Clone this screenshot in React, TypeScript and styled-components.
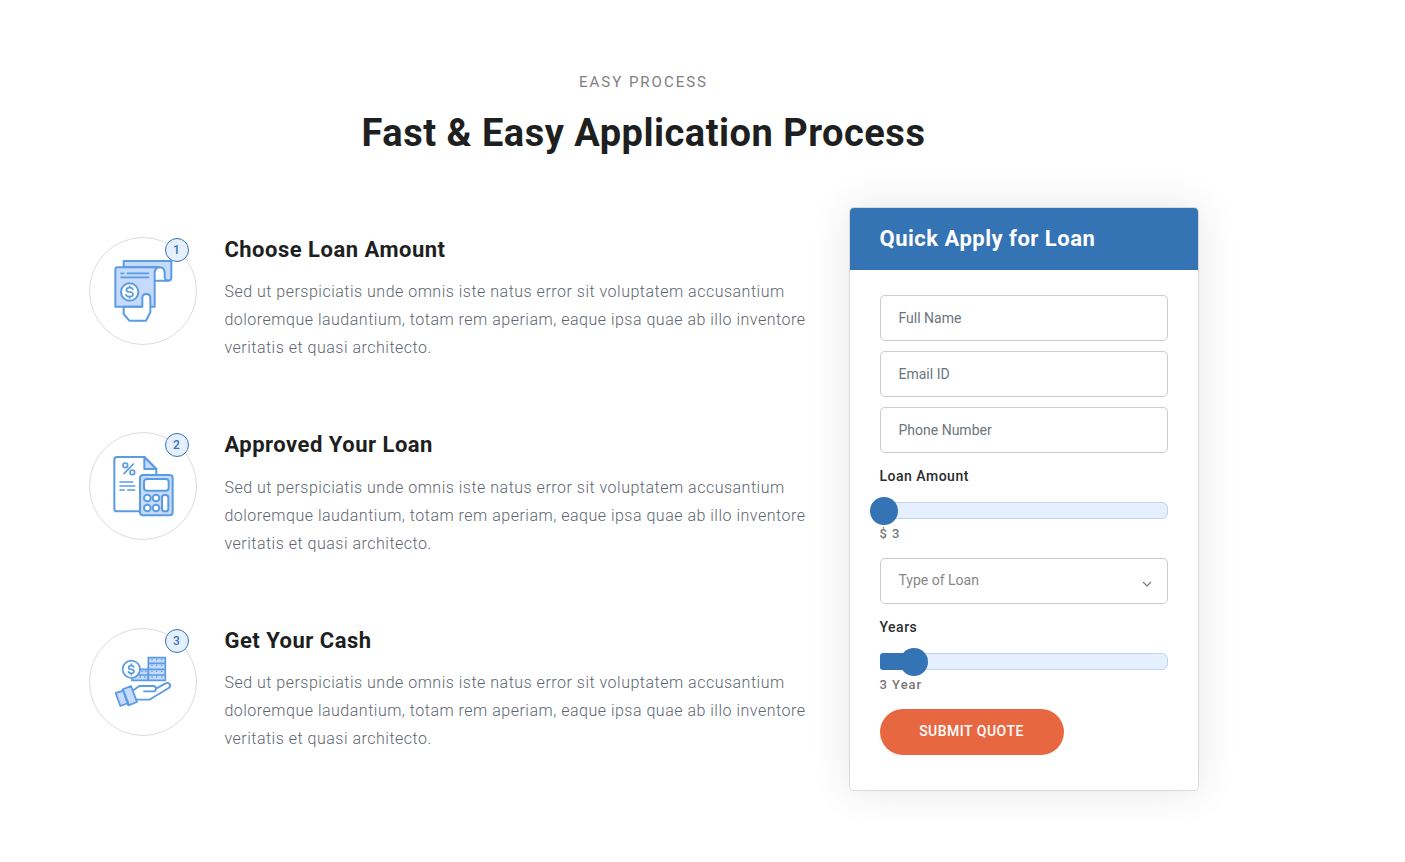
import React from "react";
import styled, { createGlobalStyle } from "styled-components";

const GlobalStyle = createGlobalStyle`
  *, *::before, *::after { box-sizing: border-box; }
  body { margin: 0; background: #fff; font-family: Roboto, sans-serif; color: #1d1f20; }
  h2, h3, p { margin: 0; }
`;

const Section = styled.section`
  width: 1110px;
  margin-left: 88.5px;
  padding-top: 70px;
`;

const Heading = styled.header`
  text-align: center;
  height: 137px;
`;

const Eyebrow = styled.p`
  font-size: 15px;
  line-height: 24px;
  letter-spacing: 2px;
  color: #808080;
  text-transform: uppercase;
`;

const Title = styled.h2`
  margin-top: 16px;
  font-size: 38px;
  line-height: 46px;
  font-weight: 700;
  letter-spacing: 0.5px;
`;

const Columns = styled.div`
  display: grid;
  grid-template-columns: 730px 350px;
  column-gap: 30px;
  align-items: start;
`;

const Steps = styled.div`
  padding-top: 29.9px;
`;

const Step = styled.article`
  display: grid;
  grid-template-columns: 108px 1fr;
  column-gap: 27.9px;
  margin-bottom: 70px;
`;

const IconRing = styled.div`
  position: relative;
  width: 108px;
  height: 108px;
  border: 1px solid #dcdcdc;
  border-radius: 50%;
`;

const StepIcon = styled.svg`
  display: block;
  width: 108px;
  height: 108px;
  margin: -1px;
  fill: none;
  stroke: #5a9ce2;
  stroke-width: 6;
  stroke-linecap: round;
  stroke-linejoin: round;
`;

const StepNumber = styled.span`
  position: absolute;
  top: 0;
  right: 7px;
  width: 24px;
  height: 24px;
  border: 1px solid #3473b4;
  border-radius: 50%;
  background: #e5effe;
  color: #3473b4;
  font-size: 12px;
  font-weight: 500;
  line-height: 22px;
  text-align: center;
`;

const StepTitle = styled.h3`
  font-size: 22px;
  line-height: 26.4px;
  font-weight: 700;
  letter-spacing: 0.5px;
`;

const StepText = styled.p`
  margin-top: 15px;
  font-size: 16px;
  line-height: 28px;
  font-weight: 300;
  letter-spacing: 0.5px;
  color: #5e6670;
`;

const Card = styled.aside`
  height: 584px;
  border: 1px solid #dadada;
  border-radius: 5px;
  background: #fff;
  box-shadow: 0 0 40px rgba(0, 0, 0, 0.1);
`;

const CardTitle = styled.h3`
  height: 62px;
  padding: 0 30px;
  border-radius: 4px 4px 0 0;
  background: #3473b4;
  color: #fff;
  font-size: 22px;
  font-weight: 700;
  line-height: 62px;
  letter-spacing: 0.5px;
`;

const Form = styled.form`
  display: flex;
  flex-direction: column;
  padding: 25px 30px 0;
`;

const Field = styled.input`
  height: 46px;
  margin: 0 0 10px;
  padding: 0 18px;
  border: 1px solid #cbcbcb;
  border-radius: 5px;
  background: #fff;
  font: 400 14px Roboto, sans-serif;
  outline: none;
  &::placeholder { color: #6c757d; opacity: 1; }
`;

const Range = styled.div`
  display: flex;
  flex-direction: column;
`;

const Label = styled.label`
  font-size: 14px;
  font-weight: 500;
  line-height: 26px;
  letter-spacing: 0.5px;
  color: #2b2d2f;
`;

const Track = styled.div`
  position: relative;
  height: 17px;
  margin-top: 13px;
  border: 1px solid #bfd6f1;
  border-radius: 6px;
  background: #e5effe;
`;

const Fill = styled.div<{ $width: number }>`
  width: ${(p) => p.$width}px;
  height: 17px;
  margin: -1px;
  border-radius: 3px 0 0 3px;
  background: #3473b4;
`;

const Thumb = styled.div<{ $left: number }>`
  position: absolute;
  top: -6px;
  left: ${(p) => p.$left}px;
  width: 28px;
  height: 28px;
  border-radius: 50%;
  background: #3473b4;
`;

const Value = styled.output`
  font-size: 13px;
  font-weight: 500;
  line-height: 30px;
  letter-spacing: 1px;
  color: #777;
`;

const Select = styled.div`
  display: flex;
  justify-content: space-between;
  height: 46px;
  margin: 9px 0 10px;
  padding: 0 15px 0 18px;
  border: 1px solid #cbcbcb;
  border-radius: 5px;
  color: #888;
  font-size: 14px;
  line-height: 43px;
`;

const Chevron = styled.svg`
  width: 10px;
  height: 6px;
  margin-top: 22px;
  fill: none;
  stroke: #777;
  stroke-width: 1.2;
`;

const Submit = styled.button`
  width: 184px;
  height: 46px;
  margin-top: 9px;
  padding: 0 0 2px;
  border: 0;
  border-radius: 23px;
  background: #e76741;
  color: #fff;
  font: 500 14px Roboto, sans-serif;
  letter-spacing: 0.5px;
`;

const tint = "#c5dafd";

const Bill = () => (
  <StepIcon viewBox="18 21 324 324">
    <path fill={tint} d="M122 112V93H265V142Q265 152 256 152Q247 152 245 142V128Q244 112 230 112Z" />
    <path d="M217 152H256" />
    <path fill={tint} d="M204 230H97V119Q97 112 104 112H230Q216 113 215 127V230H204" />
    <path d="M114 130H122M133 130H197M114 142H197" strokeWidth="5" />
    <circle cx="140" cy="186" r="26" fill="#fff" />
    <path d="M150 178Q148 173 140 173Q130 173 130 180Q130 186 140 186Q150 187 150 193Q150 200 140 200Q131 200 129 194M140 168V173M140 200V205" strokeWidth="5" />
    <path fill="#fff" stroke="none" d="M122 233H178V204Q178 192 190 192Q202 192 202 204V247L189 272H139L122 253Z" />
    <path d="M122 234V252L139 272H189L202 247V204Q202 192 190 192Q178 192 178 204V230H122" />
  </StepIcon>
);

const Calculator = () => (
  <StepIcon viewBox="18 18 324 324">
    <path d="M170 256H102Q94 256 94 248V101Q94 93 102 93H184L220 129V147" />
    <path fill={tint} d="M184 93V129H220Z" />
    <circle cx="127" cy="118" r="7" strokeWidth="5" />
    <circle cx="148" cy="139" r="7" strokeWidth="5" />
    <path d="M151 114L123 143M111 168H149M111 180H155M111 192H124M134 192H155" strokeWidth="5" />
    <rect x="171" y="147" width="98" height="121" rx="9" fill={tint} />
    <rect x="183" y="159" width="74" height="35" rx="9" fill="#fff" />
    <g fill="#fff">
      <circle cx="193" cy="216" r="10" />
      <circle cx="219" cy="216" r="10" />
      <circle cx="193" cy="246" r="10" />
      <circle cx="219" cy="246" r="10" />
      <rect x="237" y="207" width="19" height="49" rx="8" />
    </g>
  </StepIcon>
);

const Cash = () => (
  <StepIcon viewBox="18 18 324 324">
    <g fill={tint} strokeWidth="5" strokeLinejoin="miter">
      <path d="M147 142H196V175H147ZM147 159H196" />
      <path d="M196 107H247V175H196ZM196 124H247M196 142H247M196 159H247" />
    </g>
    <path d="M207 111V115M221 111V115M236 111V115M207 128V132M221 128V132M236 128V132M178 146V150M188 146V150M207 146V150M221 146V150M236 146V150M158 163V167M172 163V167M185 163V167M207 163V167M221 163V167M236 163V167" strokeWidth="4" strokeLinecap="butt" />
    <circle cx="145" cy="142" r="26" fill="#fff" strokeWidth="5" />
    <path d="M152 135Q151 131 145 131Q137 131 137 137Q137 142 145 142Q153 143 153 148Q153 154 145 154Q138 154 136 149M145 126V131M145 154V159" strokeWidth="5" />
    <path fill={tint} strokeWidth="5.5" d="M98 213L121 206L136 243L112 252ZM119 202L144 192L162 240L136 250Z" />
    <path strokeWidth="5.5" d="M151 205L169 192H211Q219 192 219 200Q219 208 211 208H183M219 200L248 184Q258 181 261 188Q263 194 256 199L199 233H160" />
  </StepIcon>
);

const text =
  "Sed ut perspiciatis unde omnis iste natus error sit voluptatem accusantium doloremque laudantium, totam rem aperiam, eaque ipsa quae ab illo inventore veritatis et quasi architecto.";

const steps = [
  { title: "Choose Loan Amount", Icon: Bill },
  { title: "Approved Your Loan", Icon: Calculator },
  { title: "Get Your Cash", Icon: Cash },
];

interface SliderProps {
  label: string;
  value: string;
  fill: number;
  thumb: number;
}

const Slider = ({ label, value, fill, thumb }: SliderProps) => (
  <Range>
    <Label>{label}</Label>
    <Track>
      <Fill $width={fill} />
      <Thumb $left={thumb} />
    </Track>
    <Value>{value}</Value>
  </Range>
);

export default function App() {
  return (
    <>
      <GlobalStyle />
      <Section>
        <Heading>
          <Eyebrow>Easy Process</Eyebrow>
          <Title>Fast &amp; Easy Application Process</Title>
        </Heading>
        <Columns>
          <Steps>
            {steps.map(({ title, Icon }, i) => (
              <Step key={title}>
                <IconRing>
                  <Icon />
                  <StepNumber>{i + 1}</StepNumber>
                </IconRing>
                <div>
                  <StepTitle>{title}</StepTitle>
                  <StepText>{text}</StepText>
                </div>
              </Step>
            ))}
          </Steps>
          <Card>
            <CardTitle>Quick Apply for Loan</CardTitle>
            <Form>
              <Field placeholder="Full Name" />
              <Field placeholder="Email ID" />
              <Field placeholder="Phone Number" />
              <Slider label="Loan Amount" value="$ 3" fill={4} thumb={-11} />
              <Select>
                <span>Type of Loan</span>
                <Chevron viewBox="0 0 10 6">
                  <path d="M1 1L5 5L9 1" />
                </Chevron>
              </Select>
              <Slider label="Years" value="3 Year" fill={34} thumb={19} />
              <Submit type="button">SUBMIT QUOTE</Submit>
            </Form>
          </Card>
        </Columns>
      </Section>
    </>
  );
}
